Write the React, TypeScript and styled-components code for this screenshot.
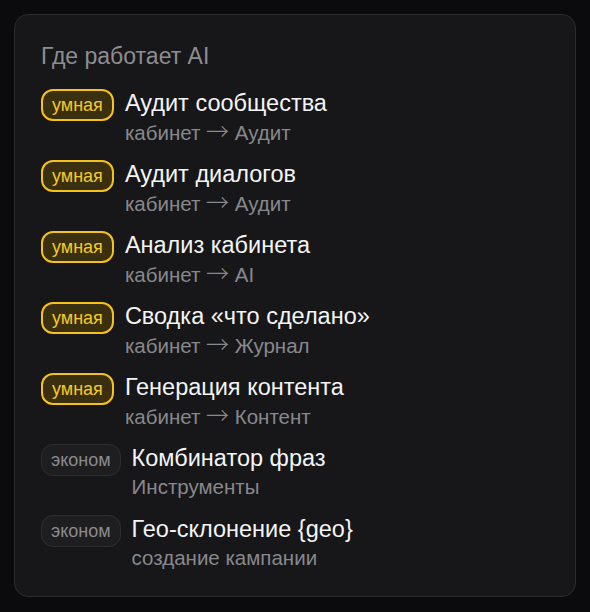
import React from 'react';
import styled, { createGlobalStyle } from 'styled-components';

const GlobalStyle = createGlobalStyle`
	html, body {
		margin: 0;
		padding: 0;
		background: #0b0b0d;
	}
	body {
		font-family: 'Liberation Sans', Arial, sans-serif;
	}
`;

const Page = styled.div`
	padding: 14px;
	width: 590px;
	box-sizing: border-box;
`;

const Card = styled.section`
	width: 562px;
	height: 583px;
	box-sizing: border-box;
	padding: 27px 26px;
	background: #171719;
	border: 1px solid #2c2c2f;
	border-radius: 14px;
`;

const Heading = styled.h2`
	margin: 0 0 19px;
	font-size: 23px;
	line-height: 28px;
	font-weight: 400;
	color: #8d8d92;
`;

const List = styled.ul`
	margin: 0;
	padding: 0;
	list-style: none;
	display: flex;
	flex-direction: column;
	gap: 15px;
`;

const Row = styled.li`
	display: flex;
	align-items: flex-start;
	gap: 11px;
`;

const Badge = styled.span<{ $smart: boolean }>`
	flex: none;
	height: 32px;
	box-sizing: border-box;
	padding: 0 9px;
	display: flex;
	align-items: center;
	border-radius: 12px;
	font-size: 18px;
	border: ${(p) => (p.$smart ? '2px solid #f4c21b' : '1px solid #2e2e31')};
	background: ${(p) => (p.$smart ? '#3a2f0f' : '#1e1e20')};
	color: ${(p) => (p.$smart ? '#f5c92a' : '#8a8a8f')};
`;

const Text = styled.div`
	display: flex;
	flex-direction: column;
`;

const Title = styled.span`
	font-size: 23.5px;
	line-height: 28px;
	color: #f4f4f5;
`;

const Path = styled.span`
	height: 26px;
	margin-top: 2px;
	font-size: 20.5px;
	line-height: 26px;
	color: #88888d;
	white-space: nowrap;
`;

const Arrow = styled.span`
	font-family: 'Noto Sans CJK JP', 'DejaVu Sans', sans-serif;
	font-weight: 300;
	font-size: 23px;
	line-height: 1;
`;

interface Item {
	mode: 'умная' | 'эконом';
	title: string;
	path: string[];
}

const items: Item[] = [
	{ mode: 'умная', title: 'Аудит сообщества', path: ['кабинет', 'Аудит'] },
	{ mode: 'умная', title: 'Аудит диалогов', path: ['кабинет', 'Аудит'] },
	{ mode: 'умная', title: 'Анализ кабинета', path: ['кабинет', 'AI'] },
	{ mode: 'умная', title: 'Сводка «что сделано»', path: ['кабинет', 'Журнал'] },
	{ mode: 'умная', title: 'Генерация контента', path: ['кабинет', 'Контент'] },
	{ mode: 'эконом', title: 'Комбинатор фраз', path: ['Инструменты'] },
	{ mode: 'эконом', title: 'Гео-склонение {geo}', path: ['создание кампании'] }
];

function App() {
	return (
		<Page>
			<GlobalStyle />
			<Card>
				<Heading>Где работает AI</Heading>
				<List>
					{items.map((item, index) => (
						<Row key={index}>
							<Badge $smart={item.mode === 'умная'}>{item.mode}</Badge>
							<Text>
								<Title>{item.title}</Title>
								<Path>
									{item.path.map((part, i) => (
										<React.Fragment key={i}>
											{i > 0 && (
												<>
													{' '}
													<Arrow>→</Arrow>{' '}
												</>
											)}
											{part}
										</React.Fragment>
									))}
								</Path>
							</Text>
						</Row>
					))}
				</List>
			</Card>
		</Page>
	);
}

export default App;
